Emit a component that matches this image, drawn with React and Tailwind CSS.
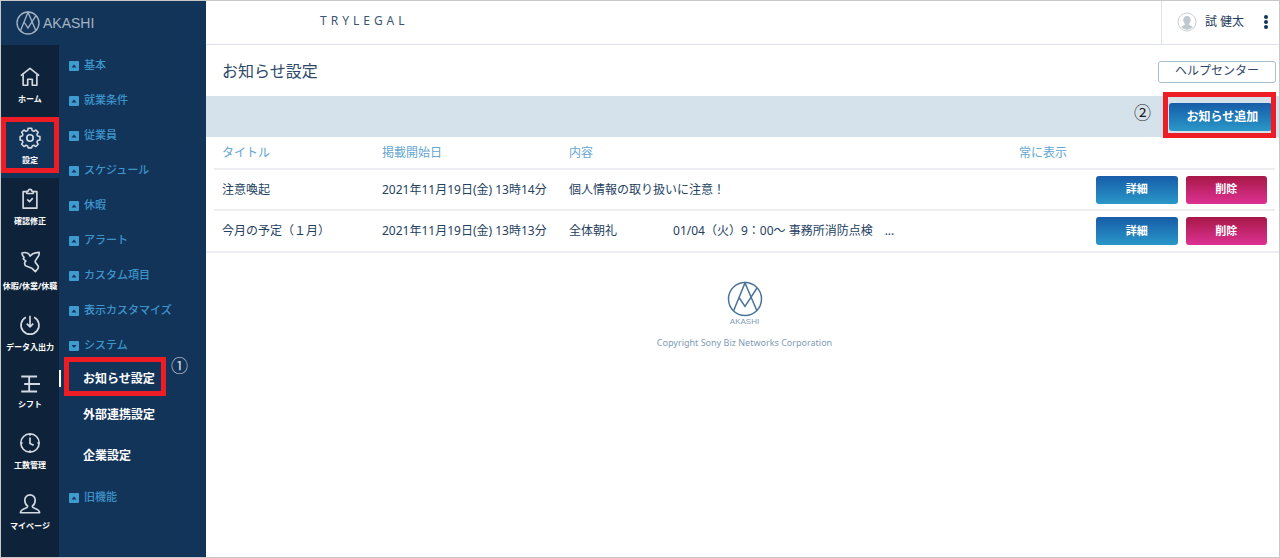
import React, { useState } from 'react'

const railItems = [
    { label: 'ホーム', icon: HomeIcon, size: 'h-6' },
    { label: '設定', icon: GearIcon, size: 'h-6' },
    { label: '確認修正', icon: ClipboardIcon, size: 'h-6' },
    { label: '休暇/休業/休職', icon: BirdIcon, size: 'h-7' },
    { label: 'データ入出力', icon: DataIcon, size: 'h-6' },
    { label: 'シフト', icon: ShiftIcon, size: 'h-5' },
    { label: '工数管理', icon: ClockIcon, size: 'h-6' },
    { label: 'マイページ', icon: UserIcon, size: 'h-6' },
]

const menuItems = ['基本', '就業条件', '従業員', 'スケジュール', '休暇', 'アラート', 'カスタム項目', '表示カスタマイズ']

const notices = [
    { id: 1, title: '注意喚起', date: '2021年11月19日(金) 13時14分', body: ['個人情報の取り扱いに注意！'] },
    { id: 2, title: '今月の予定（１月）', date: '2021年11月19日(金) 13時13分', body: ['全体朝礼', '01/04（火）9：00～ 事務所消防点検　...'] },
]

function HomeIcon() {
    return (
        <>
            <path d="M2 10.500 12 2.500l10 8" />
            <path d="M4.500 9v12h5v-6.500h5V21h5V9" />
        </>
    )
}

function GearIcon() {
    return (
        <>
            <path d="M10 2.500h4l.6 2.700 1.900.8 2.300-1.500 2.700 2.700-1.500 2.300.8 1.900 2.700.6v4l-2.700.6-.8 1.900 1.500 2.300-2.700 2.700-2.300-1.500-1.900.8-.6 2.200h-4l-.6-2.200-1.900-.8-2.300 1.500-2.700-2.700 1.500-2.300-.8-1.900L.8 16v-4l2.400-.6.8-1.900-1.500-2.300 2.700-2.700L7.500 6l1.900-.8z" transform="translate(.5 -1) scale(.95)" />
            <circle cx="12" cy="12" r="3.500" />
        </>
    )
}

function ClipboardIcon() {
    return (
        <>
            <path d="M8 4H4.500v18h15V4H16" />
            <path d="M8.500 3.500h1.500a2 2 0 0 1 4 0h1.500V6h-7z" />
            <path d="m9 12.500 2.500 2.500 3.500-4" />
        </>
    )
}

function BirdIcon() {
    return (
        <path d="M3.300 2.200C5.500 1.500 7.500 1.500 9.100 2.200c1.500.6 2.400 1.800 2.900 3.300l3-2.500c2-1 4.500-1.400 7-1.500 0 1.300 0 2.500-.5 3.500L18.500 9.500c-.8 1-1 2-.7 2.900l2.900 3.600c.5 1 .5 2 0 3l-2.900 3.500L14.200 19C12 17.500 9 17.500 7 16c-.8-1-1-2.300-.8-3.600L7.500 11 4.700 8.700 5.500 7C4 5.500 3.300 4 3.300 2.200z" />
    )
}

function DataIcon() {
    return (
        <>
            <path d="M7.500 3.500a9.800 9.800 0 1 0 9 0" />
            <path d="M12 2v12m-3.500-3.500L12 14l3.500-3.500" />
        </>
    )
}

function ShiftIcon() {
    return <path d="M1.500 3h19M11 3v18M5 12h19M1.500 21h19" strokeWidth="2.200" />
}

function ClockIcon() {
    return (
        <>
            <circle cx="12" cy="12" r="10" />
            <path d="M12 6v6.500l4 2M12 2v2M12 20v2M2 12h2M20 12h2" />
        </>
    )
}

function UserIcon() {
    return <path d="M9.500 14.500C7.300 13 6.300 10.500 6.300 7.700a5.700 5.700 0 0 1 11.400 0c0 2.800-1 5.300-3.200 6.800 0 3 7.500 2 8 7H1.500c.5-5 8-4 8-7z" />
}

const LogoMark = ({ className }) => (
    <svg viewBox="0 0 36 36" fill="none" stroke="currentColor" className={className} aria-hidden="true">
        <circle cx="18" cy="18" r="16.500" />
        <path d="M6.500 30 18 2l12 28M12 16.500l6 9L30 7" />
    </svg>
)

const MenuItem = ({ label, open }) => (
    <li>
        <a href="#" className="flex h-[35px] items-center gap-[5px] pl-[10px] text-[11px] text-[#3d94cb] font-medium">
            <svg viewBox="0 0 10 10" className="size-[10px] shrink-0" aria-hidden="true">
                <rect width="10" height="10" rx="1" fill="#3d9bd0" />
                <path d={open ? 'M2.500 4h5L5 7z' : 'M2.500 6.500h5L5 3.500z'} fill="#133459" />
            </svg>
            {label}
        </a>
    </li>
)

// red frame laid over the spot a step points to
const Highlight = ({ className }) => (
    <span className={`pointer-events-none absolute border-[5px] border-[#ee1c25] ${className}`} />
)

const Sidebar = () => {
    const [active, setActive] = useState('設定')

    return (
        <aside className="flex w-[205px] shrink-0 flex-col bg-[#133459]">
            <a href="#" className="flex h-11 items-center gap-[3px] pl-[15px] text-[#a5b3c5]">
                <LogoMark className="size-6 stroke-[2]" />
                <span className="font-['Liberation_Sans',sans-serif] text-sm">AKASHI</span>
            </a>

            <div className="flex flex-1">
                <nav className="w-[58px] shrink-0 bg-[#0e2339] pt-[11px]">
                    {railItems.map(({ label, icon: Icon, size }) => (
                        <button
                            key={label}
                            onClick={() => setActive(label)}
                            className={`relative flex w-full flex-col items-center gap-1 pt-[9px] pb-3 text-white ${active === label ? 'bg-[#133459]' : ''}`}
                        >
                            <svg
                                viewBox="0 0 24 24"
                                fill="none"
                                stroke="currentColor"
                                strokeWidth="1.800"
                                strokeLinejoin="round"
                                className={`w-[22px] text-[#d3dae2] ${size}`}
                                aria-hidden="true"
                            >
                                <Icon />
                            </svg>
                            <span className="whitespace-nowrap text-[8px] leading-3 font-bold">{label}</span>
                            {label === '設定' && <Highlight className="inset-x-0 top-0 bottom-[5px]" />}
                        </button>
                    ))}
                </nav>

                <ul className="flex-1 pt-[3px]">
                    {menuItems.map((label) => (
                        <MenuItem key={label} label={label} />
                    ))}
                    <MenuItem label="システム" open />
                    <li className="relative">
                        <a href="#" className="flex h-[31px] items-center pl-6 text-[12px] font-bold text-white">
                            お知らせ設定
                        </a>
                        <span className="absolute top-[7px] left-0 h-[17px] w-[2px] bg-white" />
                        <Highlight className="-top-[6px] -bottom-[2px] left-[5px] w-[102px]" />
                        <span className="absolute -top-[7px] left-[112px] text-[17px] leading-5 text-[#d5dce4]">①</span>
                    </li>
                    {['外部連携設定', '企業設定'].map((label) => (
                        <li key={label}>
                            <a href="#" className="flex h-[41px] items-center pl-6 text-[12px] font-bold text-white">{label}</a>
                        </li>
                    ))}
                    <li className="h-1" aria-hidden="true" />
                    <MenuItem label="旧機能" />
                </ul>
            </div>
        </aside>
    )
}

const Header = () => (
    <header className="flex h-11 items-stretch justify-between border-b border-[#dfe3e8]">
        <div className="flex items-center pb-[3px] pl-[114px] text-[12px] tracking-[4px] text-[#3c5573]">TRYLEGAL</div>
        <div className="flex items-center border-l border-[#dfe3e8] pr-[7px] pb-[2px] pl-[15px]">
            <svg viewBox="0 0 20 20" className="size-5" aria-hidden="true">
                <circle cx="10" cy="10" r="9" fill="#fff" stroke="#c9d0d7" />
                <path d="M10 4c-2.500 0-3.700 1.800-3.700 4 0 1.800.7 3 1.700 3.900 0 1.600-3 1.300-3.800 3.300a8 8 0 0 0 11.600 0c-.8-2-3.800-1.700-3.800-3.300 1-.9 1.700-2.100 1.700-3.900 0-2.200-1.200-4-3.700-4z" fill="#c0c8d0" />
            </svg>
            <span className="ml-2 text-[12px] text-[#1f3d60]">試 健太</span>
            <button aria-label="メニュー" className="ml-4">
                <svg viewBox="0 0 12 16" className="h-4 w-3" fill="#133459" aria-hidden="true">
                    <circle cx="6" cy="3" r="2" />
                    <circle cx="6" cy="8" r="2" />
                    <circle cx="6" cy="13" r="2" />
                </svg>
            </button>
        </div>
    </header>
)

const NoticeTable = () => (
    <div className="border-b-2 border-[#eceef2] pl-2 pr-1">
        <table className="w-full table-fixed text-left text-[12px] text-[#24415f]">
            <thead>
                <tr className="h-8 text-[#64a6d0]">
                    <th className="w-[160px] px-2 font-normal">タイトル</th>
                    <th className="w-[187px] px-2 font-normal">掲載開始日</th>
                    <th className="px-2 font-normal">内容</th>
                    <th className="w-[77px] px-2 font-normal">常に表示</th>
                    <th className="w-[187px]"></th>
                </tr>
            </thead>
            <tbody>
                {notices.map((notice) => (
                    <tr key={notice.id} className="h-[41px] border-t-2 border-[#eceef2]">
                        <td className="px-2 whitespace-nowrap">{notice.title}</td>
                        <td className="px-2 whitespace-nowrap">{notice.date}</td>
                        <td className="px-2 whitespace-nowrap">
                            <div className="flex gap-14">
                                {notice.body.map((text) => (
                                    <span key={text}>{text}</span>
                                ))}
                            </div>
                        </td>
                        <td></td>
                        <td className="px-2">
                            <div className="flex gap-2">
                                <button className="h-7 flex-1 rounded-[3px] bg-linear-to-b from-[#185ca8] to-[#2b98c8] text-[11px] font-bold text-white">詳細</button>
                                <button className="h-7 flex-1 rounded-[3px] bg-linear-to-b from-[#a81746] to-[#dd3193] text-[11px] font-bold text-white">削除</button>
                            </div>
                        </td>
                    </tr>
                ))}
            </tbody>
        </table>
    </div>
)

export default function App() {
    return (
        <div className="flex min-h-screen border border-[#c8c8c8] bg-white font-['Noto_Sans','Noto_Sans_CJK_JP',sans-serif]">
            <Sidebar />
            <main className="min-w-0 flex-1">
                <Header />

                <div className="flex h-[51px] items-center justify-between pr-[3px] pl-4">
                    <h1 className="text-base text-[#2f4a69]">お知らせ設定</h1>
                    <button className="mt-[2px] flex h-[22px] w-[118px] items-center justify-center rounded-[3px] border border-[#a9c0d3] pb-[2px] text-[12px] text-[#2f4a69]">
                        ヘルプセンター
                    </button>
                </div>

                <div className="flex h-[41px] items-center justify-end bg-[#d5e2eb] pr-1">
                    <span className="mr-[18px] mb-[8px] text-[17px] leading-5 text-[#1a1a1a]">②</span>
                    <div className="relative">
                        <button className="mr-[3px] h-7 w-[103px] rounded-[3px] bg-linear-to-b from-[#185ca8] to-[#2b98c8] pl-1 text-[12px] font-bold text-white align-middle">
                            お知らせ追加
                        </button>
                        <Highlight className="-top-[11px] -right-px -bottom-[7px] -left-[6px]" />
                    </div>
                </div>

                <NoticeTable />

                <footer className="flex flex-col items-center pt-7 pl-1 text-[#7f9cb5]">
                    <LogoMark className="size-[36px] text-[#4a739c] stroke-[1.500]" />
                    <span className="font-['Liberation_Sans',sans-serif] text-[8px] leading-[10px]">AKASHI</span>
                    <small className="mt-2 text-[9px] leading-4">Copyright Sony Biz Networks Corporation</small>
                </footer>
            </main>
        </div>
    )
}
